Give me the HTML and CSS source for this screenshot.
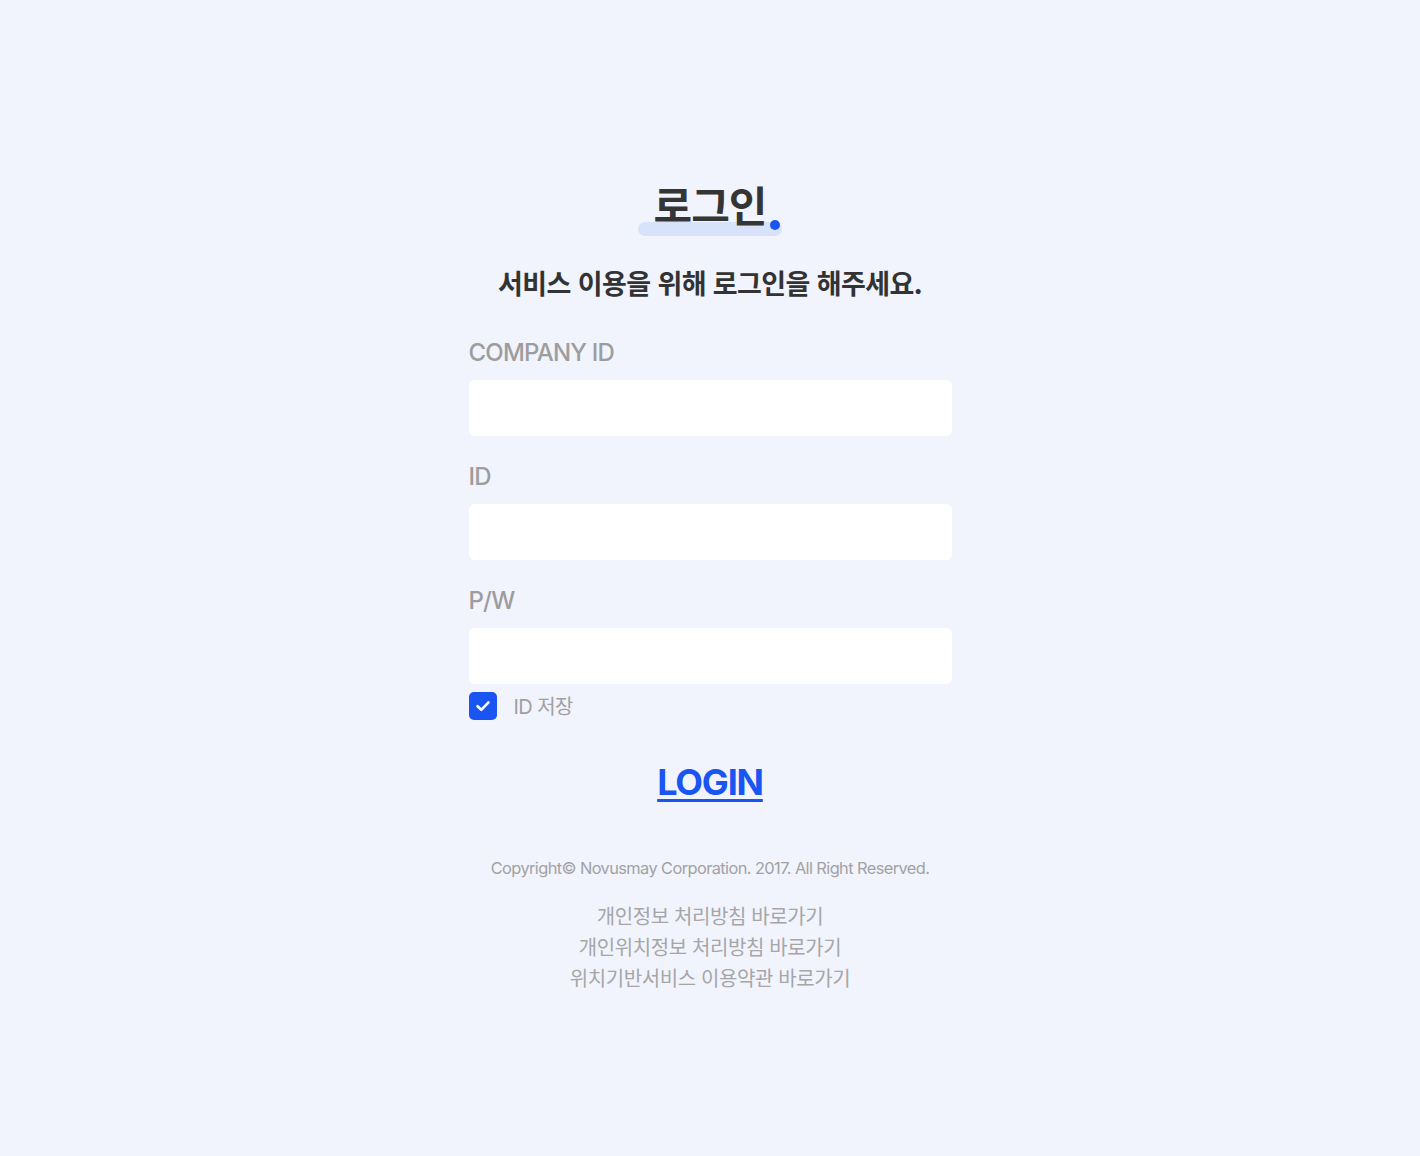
FILE: index.html
```html
<!DOCTYPE html>
<html lang="ko">
<head>
<meta charset="utf-8">
<title>로그인</title>
<link rel="stylesheet" href="styles.css">
</head>
<body>
<main class="page">
  <div class="title-wrap">
    <span class="title-bar"></span>
    <h1 class="title">로그인</h1>
    <span class="title-dot"></span>
  </div>
  <p class="subtitle">서비스 이용을 위해 로그인을 해주세요.</p>
  <form class="form">
    <label class="label">COMPANY ID</label>
    <input class="input" type="text">
    <label class="label">ID</label>
    <input class="input" type="text">
    <label class="label">P/W</label>
    <input class="input input-last" type="password">
    <div class="remember">
      <span class="check"><svg viewBox="0 0 28 28" width="28" height="28"><path d="M8.5 14.2l3.8 3.6 7.2-7.4" fill="none" stroke="#fff" stroke-width="2.6" stroke-linecap="round" stroke-linejoin="round"/></svg></span>
      <span class="remember-text">ID 저장</span>
    </div>
    <a class="login" href="#">LOGIN</a>
  </form>
  <p class="copyright">Copyright© Novusmay Corporation. 2017. All Right Reserved.</p>
  <ul class="links">
    <li>개인정보 처리방침 바로가기</li>
    <li>개인위치정보 처리방침 바로가기</li>
    <li>위치기반서비스 이용약관 바로가기</li>
  </ul>
</main>
</body>
</html>
```
FILE: styles.css
```css
* { box-sizing: border-box; }
html, body { margin: 0; padding: 0; }
body {
  background: #f1f4fd;
  font-family: Inter, "Noto Sans CJK KR", sans-serif;
  width: 1420px;
  height: 1156px;
}
.page {
  display: flex;
  flex-direction: column;
  align-items: center;
  padding-top: 174px;
}
.title-wrap {
  position: relative;
  padding: 0 16px;
}
.title {
  position: relative;
  margin: 0;
  font-family: "Noto Sans CJK KR", sans-serif;
  font-size: 42px;
  line-height: 60px;
  font-weight: 700;
  color: #353535;
  letter-spacing: -1px;
}
.title-bar {
  position: absolute;
  left: 0;
  right: 0;
  top: 48px;
  height: 14px;
  border-radius: 7px;
  background: #d8e3fb;
}
.title-dot {
  position: absolute;
  right: 2px;
  top: 46px;
  width: 10px;
  height: 10px;
  border-radius: 50%;
  background: #1a55f2;
}
.subtitle {
  margin: 31px 0 0;
  font-family: "Noto Sans CJK KR", sans-serif;
  font-size: 27px;
  line-height: 36px;
  font-weight: 700;
  color: #333;
  letter-spacing: -0.6px;
}
.form {
  width: 483px;
  display: flex;
  flex-direction: column;
  margin-top: 37px;
}
.label {
  font-size: 24px;
  line-height: 30px;
  font-weight: 500;
  color: #9d9d9d;
  letter-spacing: -0.8px;
  margin-bottom: 12px;
}
.input {
  height: 56px;
  border: none;
  border-radius: 6px;
  background: #fff;
  margin-bottom: 26px;
  outline: none;
}
.input-last { margin-bottom: 0; }
.remember {
  display: flex;
  align-items: center;
  gap: 17px;
  margin-top: 7px;
}
.check {
  width: 28px;
  height: 28px;
  border-radius: 5px;
  background: #1a55f2;
  display: flex;
}
.remember-text {
  font-family: Inter, "Noto Sans CJK KR", sans-serif;
  font-size: 20px;
  color: #a0a0a0;
  letter-spacing: -0.6px;
}
.login {
  align-self: center;
  margin-top: 40px;
  font-size: 36px;
  line-height: 44px;
  font-weight: 700;
  color: #1a55f2;
  letter-spacing: -1.2px;
  text-decoration: underline;
  text-decoration-thickness: 3px;
  text-underline-offset: 4px;
}
.copyright {
  margin: 52px 0 0;
  font-size: 16.4px;
  line-height: 24px;
  color: #a2a2a2;
  letter-spacing: -0.6px;
}
.links {
  list-style: none;
  margin: 20px 0 0;
  padding: 0;
  text-align: center;
  font-family: "Noto Sans CJK KR", sans-serif;
  font-size: 20px;
  line-height: 31px;
  color: #a6a6a6;
  letter-spacing: -0.4px;
}
```
